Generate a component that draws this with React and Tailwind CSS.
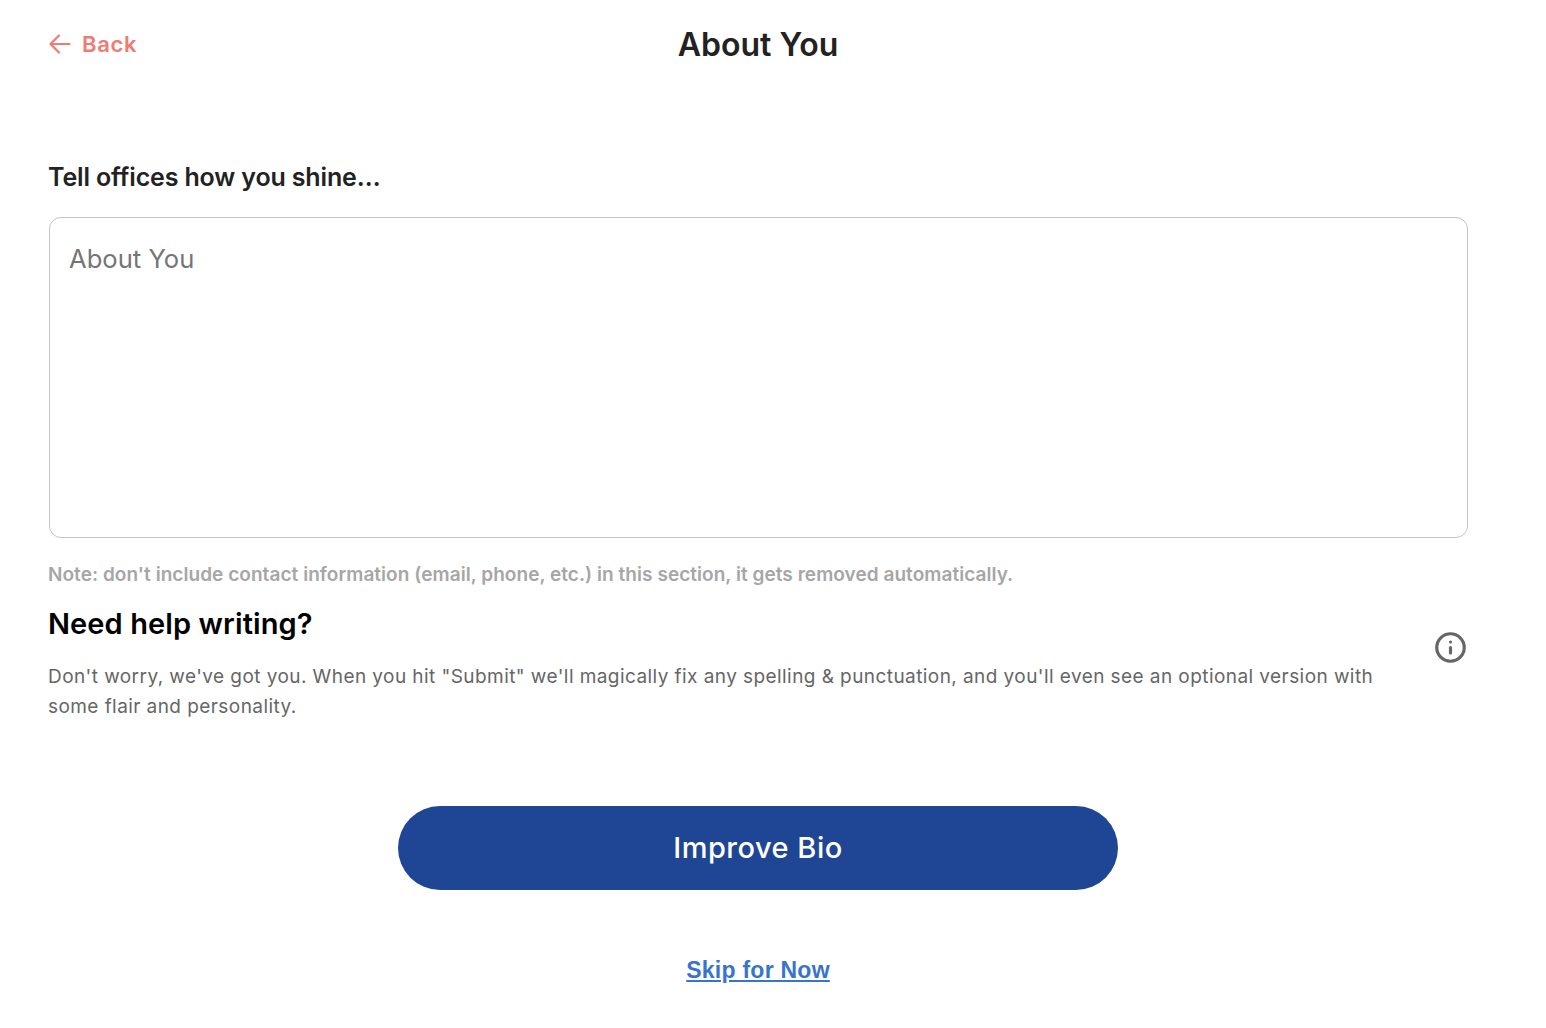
import { Info } from 'lucide-react';

const poppins = 'font-["Inter","Noto_Sans",sans-serif]';

export default function App() {
  return (
    <div className={`min-h-screen w-full bg-white pl-[48px] pr-[78px] ${poppins}`}>
      {/* Header */}
      <div className="relative flex h-[88px] items-center justify-center">
        <button className="absolute left-0 top-[31px] flex h-[26px] items-center gap-[11px] font-semibold text-[#ef7b73]">
          <svg viewBox="0 0 22 22" fill="none" stroke="currentColor" strokeWidth="2.2" strokeLinecap="round" strokeLinejoin="round" className="ml-px h-[22px] w-[22px]">
            <path d="M20.5 11H1.5M10 2.5 1.5 11l8.5 8.5" />
          </svg>
          <span className="text-[22px] leading-[26px] tracking-[0.7px]">Back</span>
        </button>
        <h1 className="pt-[2px] text-[32px] leading-[36px] font-semibold text-[#222222]">About You</h1>
      </div>

      <h2 className="mt-[74px] text-[25px] leading-[30px] font-semibold tracking-[-0.15px] text-[#222222]">Tell offices how you shine…</h2>

      <textarea
        placeholder="About You"
        className="mt-[25px] ml-px block h-[321px] w-[1419px] resize-none rounded-[12px] border border-[#c4c4c4] px-[19px] py-[23px] text-[25.6px] leading-[36px] text-[#222222] outline-none placeholder:text-[#757575]"
      />

      <p className="mt-[26px] text-[19px] leading-[22px] font-semibold tracking-[0.05px] text-[#a6a6a6]">
        Note: don't include contact information (email, phone, etc.) in this section, it gets removed automatically.
      </p>

      {/* Help block */}
      <div className="mt-[21px] flex items-start justify-between">
        <div className="w-[1340px]">
          <h3 className="text-[29px] leading-[34px] font-semibold tracking-[0.1px] text-black">Need help writing?</h3>
          <p className="mt-[21px] text-[19px] leading-[30px] tracking-[0.43px] text-[#666666]">
            Don't worry, we've got you. When you hit "Submit" we'll magically fix any spelling &amp; punctuation, and you'll even see an optional version with some flair and personality.
          </p>
        </div>
        <Info className="mt-[24px] mr-[1.5px] h-[33px] w-[33px] text-[#666666]" strokeWidth={2.3} />
      </div>

      <div className="mt-[84px] flex flex-col items-center">
        <button className="h-[84px] w-[720px] rounded-[42px] bg-[#1f4695] text-[29px] font-medium tracking-[0.5px] text-white">
          Improve Bio
        </button>
        <a href="#" className='mt-[66px] font-["Liberation_Sans",sans-serif] text-[23px] leading-[28px] font-bold tracking-[0.25px] text-[#3874cb] underline'>
          Skip for Now
        </a>
      </div>
    </div>
  );
}
